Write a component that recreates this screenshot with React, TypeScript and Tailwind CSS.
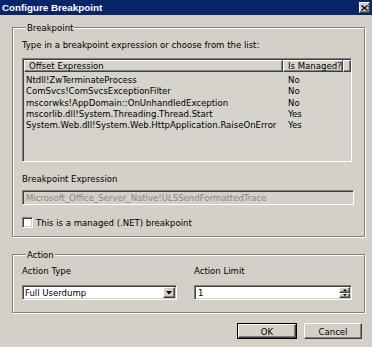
import React from "react";

const rows: [string, string][] = [
  ["Ntdll!ZwTerminateProcess", "No"],
  ["ComSvcs!ComSvcsExceptionFilter", "No"],
  ["mscorwks!AppDomain::OnUnhandledException", "No"],
  ["mscorlib.dll!System.Threading.Thread.Start", "Yes"],
  ["System.Web.dll!System.Web.HttpApplication.RaiseOnError", "Yes"],
];

const raised =
  "border border-t-white border-l-white border-r-[#404040] border-b-[#404040] shadow-[inset_-1px_-1px_0_#808080]";
const sunken =
  "border border-t-[#808080] border-l-[#808080] border-r-white border-b-white shadow-[inset_1px_1px_0_#404040,inset_-1px_-1px_0_#d4d0c8]";

export default function App() {
  return (
    <div className="w-[372px] h-[347px] bg-[#d4d0c8] flex flex-col overflow-hidden text-[9.5px] text-black [font-family:'DejaVu_Sans_Condensed','Liberation_Sans',sans-serif] leading-[11px]">
      {/* Title bar */}
      <div className="h-[15px] bg-[#0a246a] flex items-center justify-between pl-[2px] pr-[2px]">
        <span className="text-white font-bold text-[9.8px] leading-[15px] [font-family:'Liberation_Sans',sans-serif]">Configure Breakpoint</span>
        <div className={`w-[11px] h-[11px] bg-[#d4d0c8] flex items-center justify-center ${raised}`}>
          <svg width="7" height="6" viewBox="0 0 7 6">
            <path d="M0.5 0.5 L6.5 5.5 M6.5 0.5 L0.5 5.5" stroke="#000" strokeWidth="1.4" />
          </svg>
        </div>
      </div>

      {/* Breakpoint group */}
      <fieldset className="ml-[12px] mt-[7px] w-[353px] border border-[#808080] shadow-[inset_1px_1px_0_white,1px_1px_0_white] px-[9px] pb-[8px]">
        <legend className="ml-[4px] px-[1px] bg-[#d4d0c8] leading-[11px]">Breakpoint</legend>
        <div className="mt-[6px] leading-[11px]">Type in a breakpoint expression or choose from the list:</div>
        <div className={`mt-[8px] w-[330px] h-[104px] bg-[#d6d3cc] ${sunken} flex flex-col`}>
          <div className="flex h-[12px] shrink-0 ml-[1px] mt-[1px]">
            <div className={`w-[259px] ${raised} pl-[4px] leading-[10px]`}>Offset Expression</div>
            <div className={`w-[60px] ${raised} pl-[4px] leading-[10px]`}>Is Managed?</div>
            <div className={`flex-1 ${raised}`} />
          </div>
          <div className="pt-[2px] flex flex-col">
            {rows.map(([a, b]) => (
              <div key={a} className="flex h-[11.3px] leading-[11.3px]">
                <div className="w-[260px] pl-[3px] whitespace-nowrap">{a}</div>
                <div className="pl-[5px]">{b}</div>
              </div>
            ))}
          </div>
        </div>
        <div className="mt-[11px]">Breakpoint Expression</div>
        <div className={`mt-[6px] w-[332px] h-[15px] bg-[#d4d0c8] ${sunken} pl-[3px] flex items-center text-[#8a8780]`}>
          Microsoft_Office_Server_Native!ULSSendFormattedTrace
        </div>
        <div className="mt-[12px] flex items-center">
          <div className={`w-[11px] h-[11px] bg-white ${sunken}`} />
          <span className="ml-[3px]">This is a managed (.NET) breakpoint</span>
        </div>
      </fieldset>

      {/* Action group */}
      <fieldset className="ml-[12px] mt-[12px] w-[353px] border border-[#808080] shadow-[inset_1px_1px_0_white,1px_1px_0_white] px-[9px] pb-[12px]">
        <legend className="ml-[4px] px-[1px] bg-[#d4d0c8] leading-[11px]">Action</legend>
        <div className="flex mt-[5px]">
          <div className="flex flex-col w-[172px]">
            <span>Action Type</span>
            <div className={`mt-[9px] w-[155px] h-[15px] bg-white ${sunken} flex items-center justify-between`}>
              <span className="pl-[2px]">Full Userdump</span>
              <div className={`w-[12px] h-[11px] mr-[1px] bg-[#d4d0c8] ${raised} flex items-center justify-center`}>
                <svg width="6" height="4" viewBox="0 0 6 4">
                  <path d="M0 0 H6 L3 3.5 Z" fill="#000" />
                </svg>
              </div>
            </div>
          </div>
          <div className="flex flex-col">
            <span>Action Limit</span>
            <div className={`mt-[9px] w-[158px] h-[15px] bg-white ${sunken} flex items-center justify-between`}>
              <span className="pl-[3px]">1</span>
              <div className="flex flex-col mr-[1px]">
                <div className={`w-[11px] h-[5.5px] bg-[#d4d0c8] ${raised} flex items-center justify-center`}>
                  <svg width="4" height="2" viewBox="0 0 4 2"><path d="M0 2 H4 L2 0 Z" fill="#000" /></svg>
                </div>
                <div className={`w-[11px] h-[5.5px] bg-[#d4d0c8] ${raised} flex items-center justify-center`}>
                  <svg width="4" height="2" viewBox="0 0 4 2"><path d="M0 0 H4 L2 2 Z" fill="#000" /></svg>
                </div>
              </div>
            </div>
          </div>
        </div>
      </fieldset>

      {/* Buttons */}
      <div className="flex justify-end gap-[7px] pr-[10px] mt-[10px]">
        <div className="w-[60px] h-[16px] border border-black flex">
          <div className={`flex-1 ${raised} flex items-center justify-center`}>OK</div>
        </div>
        <div className={`w-[58px] h-[16px] ${raised} flex items-center justify-center`}>Cancel</div>
      </div>
    </div>
  );
}
